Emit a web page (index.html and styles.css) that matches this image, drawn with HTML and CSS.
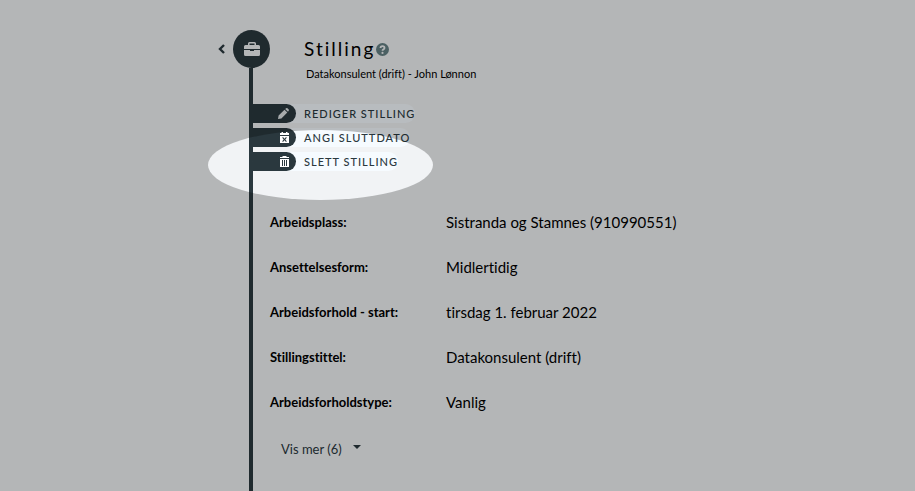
FILE: index.html
```html
<!DOCTYPE html>
<html lang="no">
<head>
<meta charset="utf-8">
<title>Stilling</title>
<meta name="viewport" content="width=device-width, initial-scale=1">
<link rel="stylesheet" href="styles.css">
</head>
<body>
<main class="page">
  <header class="head">
    <a class="back" href="#" aria-label="Tilbake">
      <svg width="8" height="10" viewBox="0 0 8 10"><path d="M6 1 2 5l4 4" fill="none" stroke="currentColor" stroke-width="2.400"/></svg>
    </a>
    <span class="badge">
      <svg width="16" height="14" viewBox="0 0 16 14" fill="currentColor"><path fill-rule="evenodd" d="M4 3V1.500Q4 0 5.500 0h5Q12 0 12 1.500V3h2.500Q16 3 16 4.500V7H0V4.500Q0 3 1.500 3zm1.500 0h5V1.500h-5z"/><path d="M0 8h6v1h4V8h6v4.500q0 1.500-1.500 1.500h-13Q0 14 0 12.500z"/></svg>
    </span>
    <h1 class="title">Stilling</h1>
    <button class="help" type="button" aria-label="Hjelp">
      <svg width="13" height="13" viewBox="0 0 13 13"><circle cx="6.500" cy="6.500" r="6.500" fill="currentColor"/><path d="M4.500 5Q4.500 3.200 6.500 3.200T8.500 5Q8.500 5.900 7.500 6.300T6.500 7.800" fill="none" stroke="#f1f3f5" stroke-width="1.800"/><circle cx="6.500" cy="9.900" r="1.100" fill="#f1f3f5"/></svg>
    </button>
  </header>
  <section class="body">
    <p class="subtitle">Datakonsulent (drift) - John Lønnon</p>
    <ul class="actions">
      <li><button class="action" type="button"><span class="tab dim"><svg width="11" height="11" viewBox="0 0 11 11" fill="currentColor"><path d="M0 11 .6 7.600 6.500 1.700l2.800 2.800L3.400 10.400zM7.200 1 8.100.3Q8.900-.2 9.500.3l1.200 1.200q.5.6 0 1.200L10 3.800z"/></svg></span><span class="name">Rediger stilling</span></button></li>
      <li><button class="action" type="button"><span class="tab"><svg width="9" height="11" viewBox="0 0 9 11" fill="currentColor"><path d="M0 1h1.500V0H3v1h3V0h1.500v1H9v2H0z"/><path fill-rule="evenodd" d="M0 4h9v7H0zm2.200 1.800L3.700 7.500 2.200 9.200l.8.700 1.500-1.600L6 9.900l.8-.7-1.500-1.700 1.500-1.700-.8-.7-1.500 1.600L3 5.100z"/></svg></span><span class="name">Angi sluttdato</span></button></li>
      <li class="focus"><button class="action" type="button"><span class="tab"><svg width="9" height="11" viewBox="0 0 9 11" fill="currentColor"><path d="M0 1h2.500V0h4v1H9v1H0z"/><path fill-rule="evenodd" d="M0 3h9v8H0zM2 4v6h1V4zm2 0v6h1V4zm2 0v6h1V4z"/></svg></span><span class="name">Slett stilling</span></button></li>
    </ul>
    <dl class="facts">
      <dt>Arbeidsplass:</dt><dd>Sistranda og Stamnes (910990551)</dd>
      <dt>Ansettelsesform:</dt><dd>Midlertidig</dd>
      <dt>Arbeidsforhold - start:</dt><dd>tirsdag 1. februar 2022</dd>
      <dt>Stillingstittel:</dt><dd>Datakonsulent (drift)</dd>
      <dt>Arbeidsforholdstype:</dt><dd>Vanlig</dd>
    </dl>
    <button class="more" type="button">Vis mer (6)<svg width="8" height="8" viewBox="0 0 8 8" fill="currentColor"><path d="M0 0h8L4 4z"/></svg></button>
  </section>
</main>
</body>
</html>
```
FILE: styles.css
```css
* { box-sizing: border-box; }

body {
  margin: 0;
  background: #f1f3f5;
  color: #000;
  font-family: Lato, sans-serif;
  font-variant-ligatures: none;
}

button {
  padding: 0;
  border: 0;
  background: none;
  color: inherit;
  font: inherit;
  font-variant-ligatures: none;
}

svg { display: block; }

.page {
  display: flex;
  flex-direction: column;
  min-height: 100vh;
  padding: 30px 0 0 218px;
  overflow: hidden;
}

.head {
  display: flex;
  align-items: center;
}

.back {
  margin-right: 7px;
  color: #2a383e;
}

.badge {
  display: grid;
  place-items: center;
  width: 37px;
  height: 38px;
  margin-right: 34px;
  border-radius: 50%;
  background: #2a383e;
  color: #f1f3f5;
}

.title {
  margin: 0;
  font-size: 19px;
  font-weight: 400;
  line-height: 24px;
  letter-spacing: 2px;
}

.help {
  margin-left: 1px;
  color: #648084;
}

.body {
  flex: 1;
  margin-left: 31px;
  border-left: 4px solid #2a383e;
}

.subtitle {
  margin: 0 0 24px 53px;
  font-size: 11px;
  line-height: 12px;
}

.actions {
  display: grid;
  gap: 5px;
  margin: 0;
  padding: 0;
  list-style: none;
}

.action {
  display: flex;
  align-items: center;
  gap: 8px;
  border-radius: 10px;
  background: #f6fbff;
  color: #2a383e;
  font-size: 11px;
  font-weight: 500;
  line-height: 19px;
  letter-spacing: 1px;
  text-transform: uppercase;
}

.tab {
  display: flex;
  align-items: center;
  justify-content: flex-end;
  width: 43px;
  height: 19px;
  padding-right: 7px;
  border-radius: 0 10px 10px 0;
  background: #2a383e;
  color: #fff;
}

.dim { color: #dfe4e6; }

.focus { position: relative; }

/* Spotlight: the shadow darkens everything outside the ellipse. */
.focus::after {
  content: "";
  position: absolute;
  top: -22px;
  left: -45px;
  width: 225px;
  height: 70px;
  border-radius: 50%;
  box-shadow: 0 0 0 200vmax rgba(0, 0, 0, 0.25);
  pointer-events: none;
}

.facts {
  display: grid;
  grid-template-columns: 176px 1fr;
  row-gap: 25px;
  margin: 41px 0 0 17px;
  line-height: 20px;
}

.facts dt {
  font-size: 13px;
  font-weight: 700;
}

.facts dd {
  margin: 0;
  font-size: 15px;
}

.more {
  display: flex;
  align-items: center;
  gap: 11px;
  margin: 27px 0 0 28px;
  color: #2a383e;
  font-size: 13px;
  line-height: 20px;
}
```
